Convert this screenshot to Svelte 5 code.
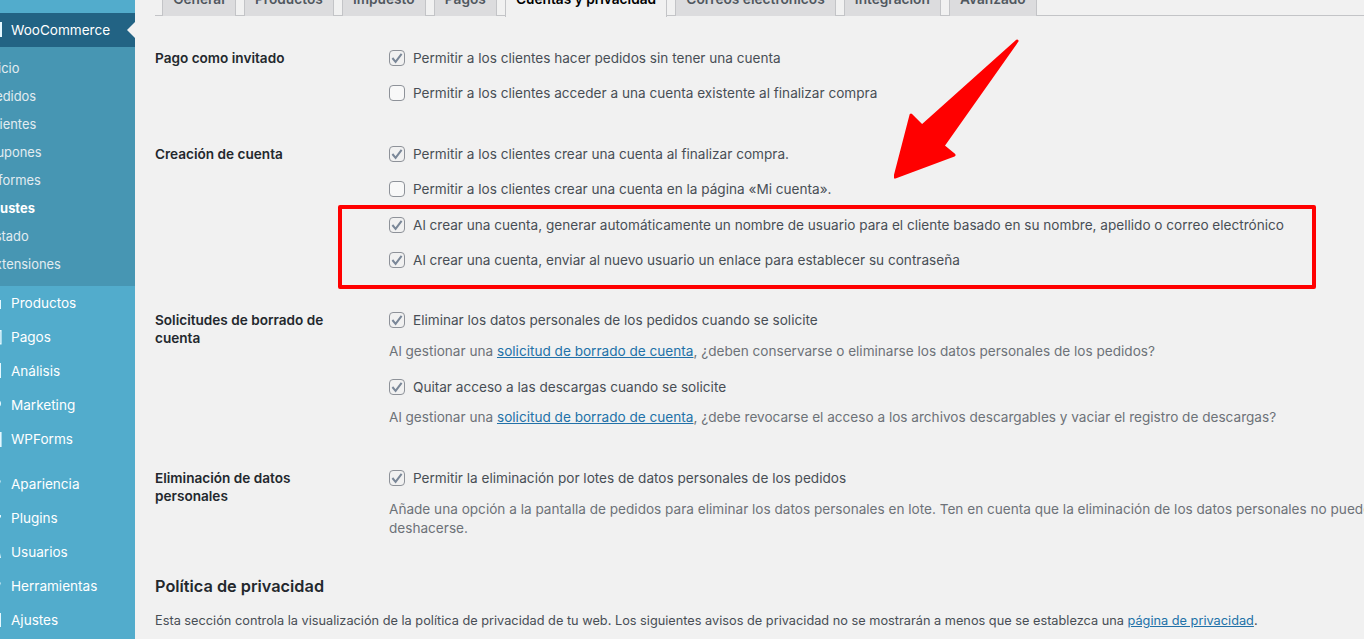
<script>
  const tabs = ['General', 'Productos', 'Impuesto', 'Pagos', 'Cuentas y privacidad', 'Correos electrónicos', 'Integración', 'Avanzado'];
  const submenu = ['Inicio', 'Pedidos', 'Clientes', 'Cupones', 'Informes', 'Ajustes', 'Estado', 'Extensiones'];
  // only the right edge of each menu icon is on screen
  const group1 = [
    { name: 'Productos', d: 'M2 7h17v9H2z' },
    { name: 'Pagos', d: 'M2 3h17.6v14.4H2V16h16.2V4.4H2z' },
    { name: 'Análisis', d: 'M2 2h17v15H2z' },
    { name: 'Marketing', d: 'M2 5h14q3 0 3 3.5T16 12H2z' },
    { name: 'WPForms', d: 'M2 3h17.6v15H2z' }
  ];
  const group2 = [
    { name: 'Apariencia', d: 'M2 9h14l3-3-1 3.5-3 1H2z' },
    { name: 'Plugins', d: 'M2 7h17v2.5H2z' },
    { name: 'Usuarios', d: 'M2 11h16l1 5H2z' },
    { name: 'Herramientas', d: 'M2 9h14l3-3-1 3.5-3 1H2z' },
    { name: 'Ajustes', d: 'M2 3h17v14H2z' }
  ];
</script>

{#snippet box(checked)}
  <span class="box" class:checked>
    {#if checked}
      <svg viewBox="0 0 16 16" width="16" height="16"><path d="M3.4 8 6.6 11.8 12.6 3.8" fill="none" stroke="#7a8798" stroke-width="2"/></svg>
    {/if}
  </span>
{/snippet}

{#snippet menuIcon(d)}
  <svg class="icon" viewBox="0 0 20 20" width="20" height="20"><path {d} fill="#e5f8ff"/></svg>
{/snippet}

<div class="page">
  <nav class="sidebar">
    <div class="menu">
      <div class="item current">
        {@render menuIcon('M2 2h18v15H2z')}WooCommerce
        <span class="pointer"></span>
      </div>
      <ul class="submenu">
        {#each submenu as name}
          <li class:active={name === 'Ajustes'}>{name}</li>
        {/each}
      </ul>
      {#each group1 as it}
        <div class="item">{@render menuIcon(it.d)}{it.name}</div>
      {/each}
      <div class="separator"></div>
      {#each group2 as it}
        <div class="item">{@render menuIcon(it.d)}{it.name}</div>
      {/each}
    </div>
  </nav>

  <main class="main">
    <div class="tabs">
      {#each tabs as tab, i}
        <span class="tab" class:on={i === 4}>{tab}</span>
      {/each}
    </div>

    <section class="row first">
      <div class="label">Pago como invitado</div>
      <div class="field">
        <div class="opt">{@render box(true)}Permitir a los clientes hacer pedidos sin tener una cuenta</div>
        <div class="opt g15">{@render box(false)}Permitir a los clientes acceder a una cuenta existente al finalizar compra</div>
      </div>
    </section>

    <section class="row second">
      <div class="label">Creación de cuenta</div>
      <div class="field">
        <div class="opt">{@render box(true)}Permitir a los clientes crear una cuenta al finalizar compra.</div>
        <div class="opt g15">{@render box(false)}Permitir a los clientes crear una cuenta en la página «Mi cuenta».</div>
        <div class="opt g16">{@render box(true)}Al crear una cuenta, generar automáticamente un nombre de usuario para el cliente basado en su nombre, apellido o correo electrónico</div>
        <div class="opt g15">{@render box(true)}Al crear una cuenta, enviar al nuevo usuario un enlace para establecer su contraseña</div>
      </div>
    </section>

    <section class="row third">
      <div class="label">Solicitudes de borrado de cuenta</div>
      <div class="field">
        <div class="opt">{@render box(true)}Eliminar los datos personales de los pedidos cuando se solicite</div>
        <p class="desc g12">Al gestionar una <a href="#a">solicitud de borrado de cuenta</a>, ¿deben conservarse o eliminarse los datos personales de los pedidos?</p>
        <div class="opt g16">{@render box(true)}Quitar acceso a las descargas cuando se solicite</div>
        <p class="desc g11">Al gestionar una <a href="#a">solicitud de borrado de cuenta</a>, ¿debe revocarse el acceso a los archivos descargables y vaciar el registro de descargas?</p>
      </div>
    </section>

    <section class="row fourth">
      <div class="label">Eliminación de datos personales</div>
      <div class="field">
        <div class="opt">{@render box(true)}Permitir la eliminación por lotes de datos personales de los pedidos</div>
        <p class="desc g12">Añade una opción a la pantalla de pedidos para eliminar los datos personales en lote. Ten en cuenta que la eliminación de los datos personales no puede<br />deshacerse.</p>
      </div>
    </section>

    <h2>Política de privacidad</h2>
    <p class="intro">Esta sección controla la visualización de la política de privacidad de tu web. Los siguientes avisos de privacidad no se mostrarán a menos que se establezca una <a href="#a">página de privacidad</a>.</p>
  </main>

  <div class="highlight"></div>
  <svg class="arrow" width="140" height="150" viewBox="0 0 140 150">
    <path d="M123 3 L28 88 L17 77 L1 139 L60 117 L49 108 Z" fill="#ff0000" stroke="#ff0000" stroke-width="3" stroke-linejoin="round"/>
  </svg>
</div>

<style>
  :global(html), :global(body) {
    margin: 0;
    overflow: hidden;
    background: #f1f1f1;
  }
  .page {
    position: relative;
    display: flex;
    width: 1364px;
    height: 639px;
    overflow: hidden;
    font-family: Inter, "Liberation Sans", sans-serif;
    font-size: 13.6px;
    line-height: 20px;
    color: #484e55;
  }
  .sidebar {
    flex: 0 0 135px;
    overflow: hidden;
    background: #52accc;
    padding-top: 13px;
  }
  .menu {
    width: 160px;
    margin-left: -25px;
  }
  .item {
    position: relative;
    display: flex;
    align-items: center;
    height: 34px;
    font-size: 13.55px;
    color: #fff;
  }
  .icon {
    flex: 0 0 20px;
    margin: 0 9px 0 7px;
  }
  .current {
    background: #226384;
  }
  .pointer {
    position: absolute;
    right: 0;
    top: 9px;
    border: 8px solid transparent;
    border-right-color: #f1f1f1;
  }
  .submenu {
    list-style: none;
    margin: 0;
    padding: 8px 0 7px;
    background: #4796b3;
    color: #e2ecf1;
    font-size: 12.9px;
  }
  .submenu li {
    height: 28px;
    line-height: 28px;
    padding-left: 12px;
  }
  .submenu .active {
    font-weight: 700;
    color: #fff;
  }
  .separator {
    height: 11px;
  }
  .main {
    flex: 1;
    min-width: 0;
    padding-left: 20px;
    overflow: hidden;
    white-space: nowrap;
  }
  .tabs {
    display: flex;
    height: 30px;
    margin-top: -15px;
    padding-left: 7px;
    gap: 7.7px;
    border-bottom: 1px solid #c3c4c7;
  }
  .tab {
    height: 30px;
    padding: 0 10.25px;
    line-height: 27px;
    font-size: 13.7px;
    font-weight: 600;
    color: #50575e;
    background: #dcdcde;
    border: 1px solid #c3c4c7;
    border-bottom: 0;
  }
  .tab.on {
    height: 31px;
    color: #000;
    background: #f1f1f1;
  }
  .row {
    display: grid;
    grid-template-columns: 234px 1fr;
  }
  .first { margin-top: 32px; }
  .second { margin-top: 41px; }
  .third { margin-top: 40px; }
  .fourth { margin-top: 41px; }
  .label {
    font-weight: 600;
    line-height: 18px;
    padding-top: 1px;
    color: #23282d;
    white-space: normal;
    width: 190px;
  }
  .opt {
    display: flex;
    align-items: center;
    gap: 8px;
    height: 20px;
  }
  .box {
    flex: 0 0 16px;
    box-sizing: border-box;
    width: 16px;
    height: 16px;
    border: 1px solid #8e9299;
    border-radius: 4px;
    background: #f8f8f8;
    position: relative;
  }
  .box.checked {
    background: #f1f1f1;
  }
  .box svg {
    position: absolute;
    left: -1px;
    top: -1px;
  }
  .g11 { margin-top: 11px; }
  .g12 { margin-top: 12px; }
  .g15 { margin-top: 15px; }
  .g16 { margin-top: 16px; }
  .desc {
    margin-bottom: 0;
    line-height: 19px;
    color: #6d7278;
  }
  a {
    color: #2271a8;
    text-decoration: underline;
  }
  h2 {
    margin: 37px 0 0;
    font-size: 16.3px;
    line-height: 22px;
    font-weight: 600;
    color: #23282d;
  }
  .intro {
    margin: 14px 0 0;
    font-size: 12.75px;
  }
  .highlight {
    position: absolute;
    left: 338px;
    top: 205px;
    width: 978px;
    height: 84px;
    box-sizing: border-box;
    border: 4px solid #ff0000;
    border-radius: 2px;
  }
  .arrow {
    position: absolute;
    left: 894px;
    top: 38px;
  }
</style>
